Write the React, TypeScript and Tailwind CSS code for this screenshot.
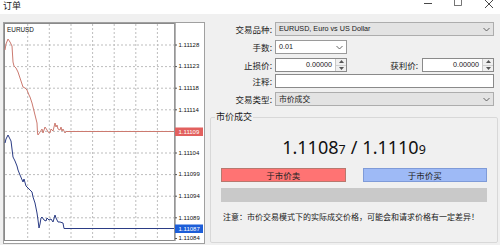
import { ReactNode } from 'react'

const redLine =
  '5,50 6,44 8,39 10,42 12,46 13,62 14,66 16,68 18,72 20,78 23,87 25,88 27,90 29,95 30,97 32,103 33,107 35,115 37,123 37.5,133 38,135 40,132 42,129 43,133 45,127 47,130 48,132 50,133 51,129 53,131 55,123 56,127 57,125 58,129 60,130 61,127 62,131 63,129 65,133 66,131.5 174,131.5'
const blueLine =
  '5,143 6,139 8,135 9,137 11,141 13,157 15,161 17,166 18,170 20,175 23,182 24,179 26,186 28,188 30,190 32,192 33,197 35,203 37,213 38,220 39,228 40,224 41,218 42,217 44,220 46,221 47,218 49,220 51,219 53,222 55,215 56,218 58,222 60,222 63,223 64,228.5 174,228.5'

const gridX = [27.7, 49.3, 71, 92.6, 114.2, 135.8, 157.4]
const prices = [
  { y: 45, v: '1.11128' },
  { y: 66.6, v: '1.11123' },
  { y: 88.2, v: '1.11118' },
  { y: 109.8, v: '1.11114' },
  { y: 153, v: '1.11104' },
  { y: 174.6, v: '1.11099' },
  { y: 196.2, v: '1.11094' },
  { y: 217.8, v: '1.11089' },
  { y: 238.5, v: '1.11084' },
]

function Chart() {
  return (
    <svg width="202" height="222" viewBox="3 22 202 222" className="block">
      <rect x="3.5" y="22.5" width="201" height="221" fill="#fff" stroke="#a0a0a0" />
      {gridX.map((x) => (
        <line key={x} x1={x} y1="24" x2={x} y2="240" stroke="#bdbdbd" strokeDasharray="2 2" />
      ))}
      {[45, 66.6, 88.2, 109.8, 131.4, 153, 174.6, 196.2, 217.8].map((y) => (
        <line key={y} x1="5" y1={y} x2="174" y2={y} stroke="#bdbdbd" strokeDasharray="2 2" />
      ))}
      <rect x="4.5" y="23.5" width="170" height="217" fill="none" stroke="#8a8a8a" />
      <line x1="175" y1="23" x2="175" y2="241" stroke="#9a9a9a" strokeWidth="1.5" />
      <text x="7" y="30.5" fontSize="6.4" fontFamily="'Liberation Sans', Arial, sans-serif" fill="#111" dominantBaseline="middle">
        EURUSD
      </text>
      <polyline points={redLine} fill="none" stroke="#cc7a70" strokeWidth="1" />
      <polyline points={blueLine} fill="none" stroke="#2b3c85" strokeWidth="1" />
      {prices.map((p) => (
        <g key={p.v}>
          <line x1="175" y1={p.y} x2="177" y2={p.y} stroke="#555" />
          <text x="178.5" y={p.y + 0.3} fontSize="6" fontFamily="'Liberation Sans', Arial, sans-serif" fill="#111" dominantBaseline="middle">
            {p.v}
          </text>
        </g>
      ))}
      <rect x="175" y="127.5" width="28" height="8.5" fill="#e2605e" />
      <text x="178.5" y="132" fontSize="6" fontFamily="'Liberation Sans', Arial, sans-serif" fill="#fff" dominantBaseline="middle">
        1.11109
      </text>
      <rect x="175" y="224.5" width="28" height="8.5" fill="#1d5ed8" />
      <text x="178.5" y="229" fontSize="6" fontFamily="'Liberation Sans', Arial, sans-serif" fill="#fff" dominantBaseline="middle">
        1.11087
      </text>
    </svg>
  )
}

function Chevron() {
  return (
    <svg width="7" height="5" viewBox="0 0 7 5" className="shrink-0">
      <polyline points="0.5,1 3.5,4 6.5,1" fill="none" stroke="#555" strokeWidth="0.9" />
    </svg>
  )
}

function Spinner() {
  return (
    <div className="w-[11px] h-full flex flex-col border-l border-[#c8c8c8] bg-[#f0f0f0]">
      <div className="flex-1 flex items-center justify-center border-b border-[#d0d0d0]">
        <svg width="5" height="3" viewBox="0 0 5 3">
          <polygon points="0,3 2.5,0 5,3" fill="#555" />
        </svg>
      </div>
      <div className="flex-1 flex items-center justify-center">
        <svg width="5" height="3" viewBox="0 0 5 3">
          <polygon points="0,0 2.5,3 5,0" fill="#555" />
        </svg>
      </div>
    </div>
  )
}

function Row({ label, className, children }: { label: string; className: string; children: ReactNode }) {
  return (
    <div className={`flex items-center h-[14px] pr-[6px] ${className}`}>
      <span className="w-[67px] text-right text-[8.5px] leading-[14px] shrink-0">{label}:</span>
      <div className="flex flex-1 items-center h-full ml-[3px]">{children}</div>
    </div>
  )
}

const latin = "font-['Liberation_Sans',Arial,sans-serif]"

export default function App() {
  return (
    <main className="w-[500px] h-[245px] bg-[#f0f0f0] flex flex-col overflow-hidden text-[#1a1a1a] font-['Noto_Sans_CJK_SC',sans-serif]">
      <div className="h-[14px] bg-white flex items-start justify-between shrink-0">
        <span className="pl-[3px] text-[9px] leading-[11px]">订单</span>
        <div className="flex items-start pr-[5px]">
          <svg width="12" height="8" viewBox="0 0 12 8">
            <line x1="2" y1="3.5" x2="10" y2="3.5" stroke="#333" strokeWidth="0.9" />
          </svg>
          <svg width="12" height="8" viewBox="0 0 12 8" className="ml-[18px]">
            <rect x="2.5" y="-2.5" width="7" height="8" fill="none" stroke="#555" strokeWidth="0.8" />
          </svg>
          <svg width="12" height="9" viewBox="0 0 12 9" className="ml-[19px]">
            <line x1="2" y1="0" x2="10" y2="8" stroke="#333" strokeWidth="0.9" />
            <line x1="10" y1="0" x2="2" y2="8" stroke="#333" strokeWidth="0.9" />
          </svg>
        </div>
      </div>
      <div className="flex flex-1">
        <div className="ml-[3px] mt-[8px] w-[202px] h-[222px] shrink-0">
          <Chart />
        </div>
        <section className="flex-1 flex flex-col">
          <Row label="交易品种" className="mt-[8px]">
            <div className="flex items-center justify-between w-full h-full px-[3px] bg-[#e3e3e3] border border-[#adadad]">
              <span className={`${latin} text-[7.2px]`}>EURUSD, Euro vs US Dollar</span>
              <Chevron />
            </div>
          </Row>
          <Row label="手数" className="mt-[4px]">
            <div className="flex items-center justify-between w-[72px] h-full px-[3px] bg-white border border-[#9a9a9a]">
              <span className={`${latin} text-[7.2px]`}>0.01</span>
              <Chevron />
            </div>
          </Row>
          <Row label="止损价" className="mt-[4px]">
            <div className="flex items-center w-[72px] h-full bg-white border border-[#8a8a8a]">
              <span className={`${latin} text-[7.2px] flex-1 text-right pr-[3px]`}>0.00000</span>
              <Spinner />
            </div>
            <span className="flex-1 text-right pr-[4px] text-[8.5px] leading-[14px]">获利价:</span>
            <div className="flex items-center w-[72px] h-full bg-white border border-[#8a8a8a]">
              <span className={`${latin} text-[7.2px] flex-1 text-right pr-[3px]`}>0.00000</span>
              <Spinner />
            </div>
          </Row>
          <Row label="注释" className="mt-[2px]">
            <div className="w-full h-full bg-white border border-[#8a8a8a]" />
          </Row>
          <Row label="交易类型" className="mt-[4px]">
            <div className="flex items-center justify-between w-full h-full px-[3px] bg-[#e3e3e3] border border-[#adadad]">
              <span className="text-[7.8px] leading-[12px]">市价成交</span>
              <Chevron />
            </div>
          </Row>
          <fieldset className="mt-[6px] ml-[5px] mr-[2px] h-[131px] border border-[#d8d8d8] rounded-[2px] px-[10px] flex flex-col">
            <legend className="ml-[-6px] px-[1px] text-[9px] leading-[10px]">市价成交</legend>
            <div className="mt-[14px] h-[22px] flex items-baseline justify-center font-['Noto_Sans',sans-serif] text-[18px] leading-[22px] text-[#111]">
              <span>1.1108</span>
              <span className="text-[12.5px]">7</span>
              <span className="px-[5px]">/</span>
              <span>1.1110</span>
              <span className="text-[12.5px]">9</span>
            </div>
            <div className="mt-[10px] h-[14px] flex gap-[17px]">
              <button className="flex-1 bg-[#ff7373] border border-[#b8786e] text-[8.5px] leading-[12px] text-[#222]">
                于市价卖
              </button>
              <button className="flex-1 bg-[#9ebaf6] border border-[#7f9bd8] text-[8.5px] leading-[12px] text-[#222]">
                于市价买
              </button>
            </div>
            <div className="mt-[6px] h-[14px] bg-[#c9c9c9]" />
            <p className="mt-[9px] ml-[2px] text-[8px] leading-[12px] whitespace-nowrap">
              注意：市价交易模式下的实际成交价格，可能会和请求价格有一定差异！
            </p>
          </fieldset>
        </section>
      </div>
    </main>
  )
}
